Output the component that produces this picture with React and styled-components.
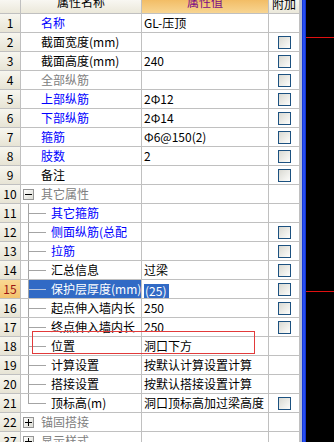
import React from "react";
import styled, { createGlobalStyle } from "styled-components";

const GlobalStyle = createGlobalStyle`
  html, body {
    margin: 0;
    padding: 0;
    background: #000;
  }
  body {
    font-family: "Noto Sans CJK SC", "DejaVu Sans", sans-serif;
    font-size: 12px;
  }
`;

const COLS = "21px 121px 127px 31px";

const TONES = {
  blue: "#0000ff",
  black: "#000000",
  grey: "#808080"
};

// kind: top | group | child
const rows = [
  { no: 1, kind: "top", name: "名称", tone: "blue", value: "GL-压顶" },
  { no: 2, kind: "top", name: "截面宽度(mm)", tone: "black", value: "", check: true },
  { no: 3, kind: "top", name: "截面高度(mm)", tone: "black", value: "240", check: true },
  { no: 4, kind: "top", name: "全部纵筋", tone: "grey", value: "", check: true },
  { no: 5, kind: "top", name: "上部纵筋", tone: "blue", value: "2Φ12", check: true },
  { no: 6, kind: "top", name: "下部纵筋", tone: "blue", value: "2Φ14", check: true },
  { no: 7, kind: "top", name: "箍筋", tone: "blue", value: "Φ6@150(2)", check: true },
  { no: 8, kind: "top", name: "肢数", tone: "blue", value: "2", check: true },
  { no: 9, kind: "top", name: "备注", tone: "black", value: "", check: true },
  { no: 10, kind: "group", name: "其它属性", tone: "grey", open: true },
  { no: 11, kind: "child", name: "其它箍筋", tone: "blue", value: "" },
  { no: 12, kind: "child", name: "侧面纵筋(总配", tone: "blue", value: "", check: true },
  { no: 13, kind: "child", name: "拉筋", tone: "blue", value: "", check: true },
  { no: 14, kind: "child", name: "汇总信息", tone: "black", value: "过梁", check: true },
  { no: 15, kind: "child", name: "保护层厚度(mm)", tone: "black", value: "(25)", check: true, selected: true },
  { no: 16, kind: "child", name: "起点伸入墙内长", tone: "black", value: "250", check: true },
  { no: 17, kind: "child", name: "终点伸入墙内长", tone: "black", value: "250", check: true },
  { no: 18, kind: "child", name: "位置", tone: "black", value: "洞口下方" },
  { no: 19, kind: "child", name: "计算设置", tone: "black", value: "按默认计算设置计算" },
  { no: 20, kind: "child", name: "搭接设置", tone: "black", value: "按默认搭接设置计算" },
  { no: 21, kind: "child", name: "顶标高(m)", tone: "black", value: "洞口顶标高加过梁高度", check: true, last: true },
  { no: 22, kind: "group", name: "锚固搭接", tone: "grey" },
  { no: 37, kind: "group", name: "显示样式", tone: "grey" }
];

const Page = styled.div`
  display: flex;
  width: 334px;
  height: 442px;
  overflow: hidden;
`;

const Grid = styled.div`
  position: relative;
  flex: none;
  width: 300px;
  display: flex;
  flex-direction: column;
  background: #fff;
`;

const HeaderRow = styled.div`
  flex: none;
  display: grid;
  grid-template-columns: ${COLS};
  height: 14px;
`;

const HeaderCell = styled.div`
  box-sizing: border-box;
  overflow: hidden;
  border-right: 1px solid #c0c0c0;
  border-bottom: 1px solid #c0c0c0;
  background: ${(p) =>
    p.$accent
      ? "linear-gradient(#f2bd66, #f8d592)"
      : "linear-gradient(#f8f7f2, #ebe8da)"};
  color: ${(p) => (p.$accent ? "#7b0a86" : "#000")};
  text-align: center;
  line-height: 18px;
  white-space: nowrap;
`;

const HeaderText = styled.span`
  display: block;
  margin-top: ${(p) => (p.$drop ? -5 : -7)}px;
`;

const Row = styled.div`
  flex: none;
  display: grid;
  grid-template-columns: ${COLS};
  height: 19px;
`;

const Cell = styled.div`
  box-sizing: border-box;
  min-width: 0;
  border-right: 1px solid #c0c0c0;
  border-bottom: 1px solid #c0c0c0;
  line-height: 18px;
  white-space: nowrap;
  overflow: hidden;
`;

const NumCell = styled(Cell)`
  text-align: center;
  background: ${(p) =>
    p.$active
      ? "linear-gradient(#fad892, #f4c36e)"
      : "linear-gradient(#f7f6ef, #e7e4d5)"};
  color: ${(p) => (p.$active ? "#9a1414" : "#000")};
`;

const NameCell = styled(Cell)`
  display: flex;
  align-items: stretch;
  padding-left: ${(p) => p.$indent}px;
`;

const Label = styled.span`
  align-self: center;
  overflow: hidden;
  color: ${(p) => (p.$selected ? "#fff" : TONES[p.$tone])};
`;

const Toggle = styled.span`
  flex: none;
  align-self: center;
  box-sizing: border-box;
  width: 11px;
  height: 11px;
  margin-right: 7px;
  border: 1px solid #959595;
  background: linear-gradient(135deg, #ffffff, #dcdcd4);
  display: flex;
  align-items: center;
  justify-content: center;
`;

const Spine = styled.span`
  flex: none;
  box-sizing: border-box;
  width: 8px;
  align-self: ${(p) => (p.$last ? "flex-start" : "stretch")};
  height: ${(p) => (p.$last ? "10px" : "auto")};
  border-right: 1px solid #a4a4a4;
`;

const Branch = styled.span`
  flex: 1;
  min-width: 0;
  display: flex;
  align-items: center;
  background: ${(p) => (p.$selected ? "#316ac5" : "transparent")};
`;

const Twig = styled.span`
  flex: none;
  width: 17px;
  height: 1px;
  margin-right: 5px;
  background: ${(p) => (p.$selected ? "#b9c6dc" : "#a4a4a4")};
`;

const ValueCell = styled(Cell)`
  padding-left: 2px;
  color: #000;
`;

const Highlight = styled.span`
  display: inline-block;
  padding: 0 3px 0 1px;
  line-height: 14px;
  vertical-align: middle;
  background: #316ac5;
  color: #fff;
`;

const CheckCell = styled(Cell)`
  display: flex;
  align-items: center;
  justify-content: center;
`;

const Checkbox = styled.span`
  box-sizing: border-box;
  width: 13px;
  height: 13px;
  border: 1px solid #1c5180;
  background: linear-gradient(135deg, #d9d9d2, #fdfdfb);
`;

const Annotation = styled.div`
  position: absolute;
  left: 32px;
  top: 331px;
  width: 223px;
  height: 23px;
  box-sizing: border-box;
  border: 1px solid #e23a3a;
  pointer-events: none;
`;

const Edge = styled.div`
  flex: none;
  width: 6px;
  background: linear-gradient(
    to right,
    #b4bcd4 0,
    #b4bcd4 2px,
    #0a2ad0 2px,
    #2f5cff 4px,
    #0a26c0 6px
  );
`;

const Canvas = styled.div`
  flex: 1;
  background: #000;
`;

function ToggleIcon({ open }) {
  return (
    <svg width="7" height="7" viewBox="0 0 7 7">
      <path d="M0 3.5H7" stroke="#000" strokeWidth="1" />
      {!open && <path d="M3.5 0V7" stroke="#000" strokeWidth="1" />}
    </svg>
  );
}

function NameContent({ row }) {
  if (row.kind === "group") {
    return (
      <NameCell $indent={2}>
        <Toggle>
          <ToggleIcon open={row.open} />
        </Toggle>
        <Label $tone={row.tone}>{row.name}</Label>
      </NameCell>
    );
  }
  if (row.kind === "child") {
    return (
      <NameCell $indent={0}>
        <Spine $last={row.last} />
        <Branch $selected={row.selected}>
          <Twig $selected={row.selected} />
          <Label $tone={row.tone} $selected={row.selected}>
            {row.name}
          </Label>
        </Branch>
      </NameCell>
    );
  }
  return (
    <NameCell $indent={20}>
      <Label $tone={row.tone}>{row.name}</Label>
    </NameCell>
  );
}

function PropertyRow({ row }) {
  return (
    <Row>
      <NumCell $active={row.selected}>{row.no}</NumCell>
      <NameContent row={row} />
      <ValueCell>
        {row.selected ? <Highlight>{row.value}</Highlight> : row.value}
      </ValueCell>
      <CheckCell>{row.check && <Checkbox />}</CheckCell>
    </Row>
  );
}

export default function App() {
  return (
    <>
      <GlobalStyle />
      <Page>
        <Grid>
          <HeaderRow>
            <HeaderCell />
            <HeaderCell>
              <HeaderText>属性名称</HeaderText>
            </HeaderCell>
            <HeaderCell $accent>
              <HeaderText>属性值</HeaderText>
            </HeaderCell>
            <HeaderCell>
              <HeaderText $drop>附加</HeaderText>
            </HeaderCell>
          </HeaderRow>
          {rows.map((row) => (
            <PropertyRow key={row.no} row={row} />
          ))}
          <Annotation />
        </Grid>
        <Edge />
        <Canvas>
          <svg width="28" height="442" viewBox="0 0 28 442">
            <path d="M0 37.5H28" stroke="#e01010" strokeWidth="1" />
            <path d="M0 291.5H28" stroke="#e01010" strokeWidth="1" />
          </svg>
        </Canvas>
      </Page>
    </>
  );
}
